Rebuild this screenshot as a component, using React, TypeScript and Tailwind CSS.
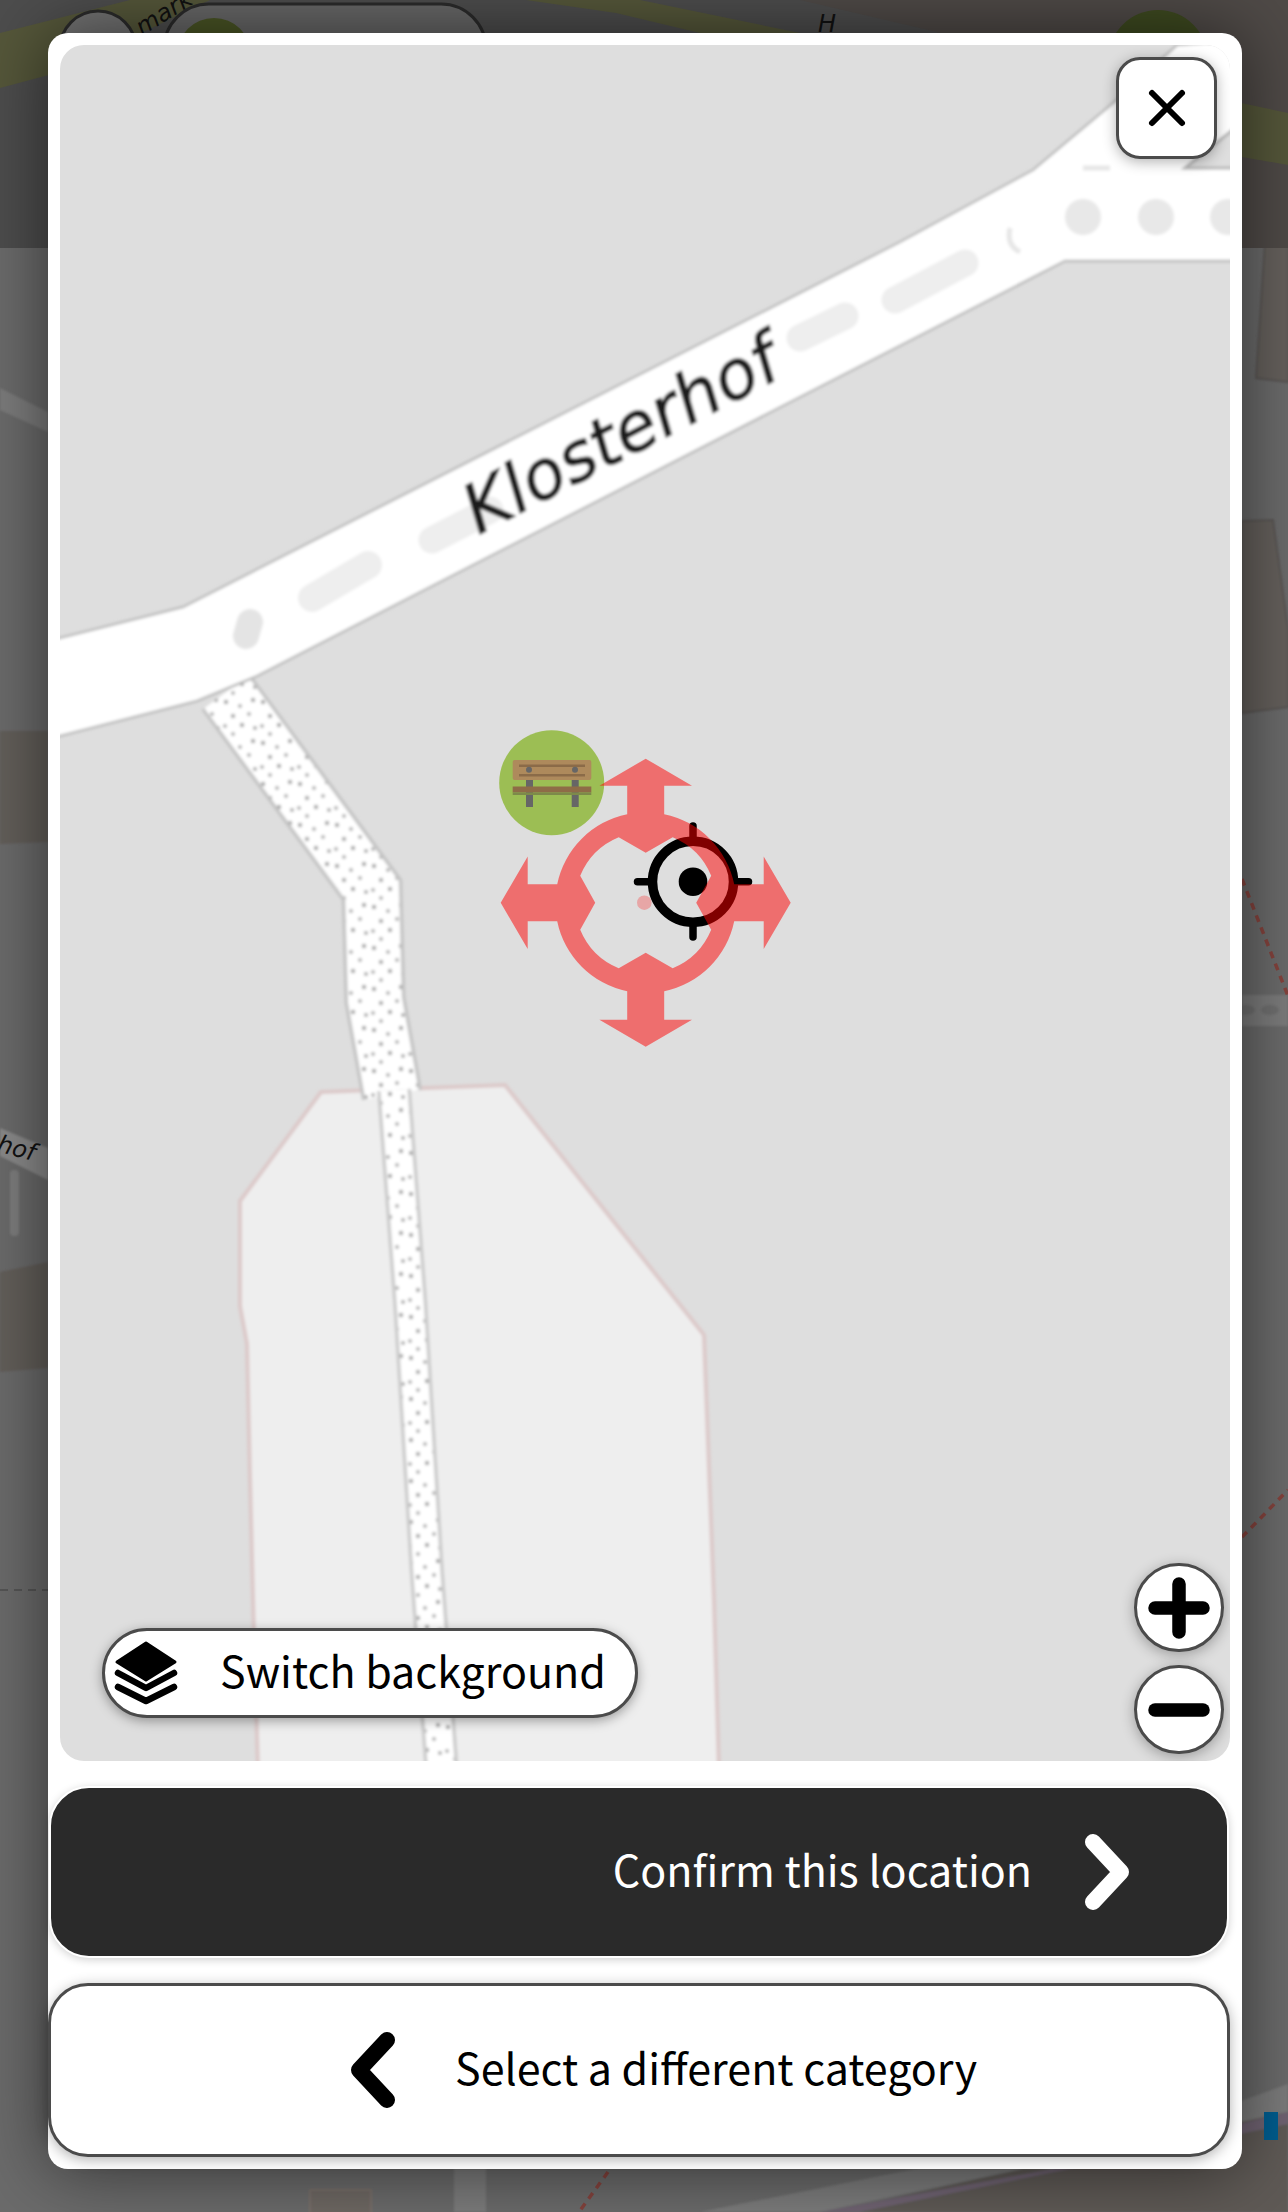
const font = "font-['Noto_Sans_CJK_JP','Noto_Sans',sans-serif]";

const BackdropMap = () => (
  <svg className="absolute inset-0" width="1288" height="2212" viewBox="0 0 1288 2212">
    <defs>
      <filter id="bgsoft"><feGaussianBlur stdDeviation="1" /></filter>
    </defs>
    <rect width="1288" height="2212" fill="#6b6b6b" />
    <g filter="url(#bgsoft)">
      <polygon points="0,388 48,412 48,432 0,410" fill="#7c7c7c" />
      <polygon points="0,731 48,731 48,842 0,844" fill="#635e5a" />
      <polygon points="0,1128 48,1148 48,1180 0,1156" fill="#8a8a8a" />
      <rect x="10" y="1170" width="9" height="66" rx="4" fill="#7e7e7e" />
      <polygon points="0,1272 48,1262 48,1368 0,1372" fill="#635e5a" />
      <polygon points="1266,227 1288,228 1288,382 1256,378" fill="#65605c" stroke="#5a5654" strokeWidth="2" />
      <polygon points="1242,521 1273,520 1288,629 1288,707 1242,713" fill="#65605c" stroke="#5a5654" strokeWidth="2" />
      <rect x="1242" y="995" width="46" height="31" fill="#7c7c7c" />
      <ellipse cx="1246" cy="1010" rx="9" ry="5" fill="#707070" />
      <ellipse cx="1270" cy="1010" rx="9" ry="5" fill="#707070" />
      <polygon points="830,2212 1288,2110 1288,2212" fill="#5f5a56" />
      <polygon points="700,2212 930,2166 1052,2169 1288,2084 1288,2112 820,2212" fill="#7c7c7c" />
      <polygon points="820,2212 1052,2169 1288,2112 1288,2124 860,2212" fill="#6f6372" />
      <rect x="454" y="2165" width="32" height="47" fill="#7c7c7c" />
      <rect x="310" y="2190" width="61" height="24" fill="#6e6864" stroke="#7a6f6a" strokeWidth="2" />
    </g>
    <g stroke="#84433d" strokeWidth="3.5" strokeDasharray="7 6" fill="none">
      <path d="M1242 879 L1288 996" />
      <path d="M1242 1537 L1288 1490" />
      <path d="M608 2172 L579 2212" />
    </g>
    <line x1="0" y1="1590" x2="48" y2="1590" stroke="#555555" strokeWidth="2" strokeDasharray="8 6" />

    <rect width="1288" height="248" fill="#4d4d4d" />
    <polygon points="0,33 130,0 210,0 60,72 0,88" fill="#55573a" />
    <polygon points="526,0 640,0 800,33 700,33 616,13" fill="#55573a" />
    <polygon points="800,0 1288,0 1288,248 1100,248 937,32" fill="#4f4a47" />
    <polygon points="1241,103 1288,113 1288,165 1242,157" fill="#55573a" />
    <rect x="60" y="11" width="76" height="90" rx="38" fill="#727272" stroke="#2b2b2b" strokeWidth="3" />
    <rect x="164" y="4" width="322" height="90" rx="45" fill="#676767" stroke="#2b2b2b" strokeWidth="3" />
    <circle cx="214" cy="55" r="37" fill="#4a5525" />
    <circle cx="1158" cy="60" r="50" fill="#3e4a20" />
    <text x="142" y="36" fontSize="24" fontStyle="italic" fill="#111111" transform="rotate(-32 142 36)" fontFamily="DejaVu Sans">mark</text>
    <text x="818" y="32" fontSize="24" fontStyle="italic" fill="#111111" fontFamily="DejaVu Sans">H</text>
    <text x="-4" y="1151" fontSize="24" fontStyle="italic" fill="#111111" transform="rotate(15 -4 1151)" fontFamily="DejaVu Sans">hof</text>
    <rect x="1264" y="2112" width="14" height="28" fill="#005d8f" />
  </svg>
);

const LocationMap = () => (
  <svg className="block" width="1170" height="1716" viewBox="60 45 1170 1716">
    <defs>
      <filter id="soft" x="-5%" y="-5%" width="110%" height="110%"><feGaussianBlur stdDeviation="1.8" /></filter>
      <filter id="crisp"><feGaussianBlur stdDeviation="0.5" /></filter>
      <pattern id="dots" patternUnits="userSpaceOnUse" width="37" height="41">
        <rect width="37" height="41" fill="#ffffff" />
        <circle cx="4" cy="5" r="2.2" fill="#a4a4a4" />
        <circle cx="18" cy="9" r="2" fill="#b0b0b0" />
        <circle cx="31" cy="3" r="2.2" fill="#a4a4a4" />
        <circle cx="11" cy="19" r="2.2" fill="#a8a8a8" />
        <circle cx="27" cy="17" r="2" fill="#b0b0b0" />
        <circle cx="3" cy="29" r="2" fill="#b0b0b0" />
        <circle cx="20" cy="28" r="2.2" fill="#a4a4a4" />
        <circle cx="33" cy="31" r="2" fill="#a8a8a8" />
        <circle cx="11" cy="37" r="2" fill="#b0b0b0" />
      </pattern>
    </defs>
    <rect x="60" y="45" width="1170" height="1716" fill="#dedede" />
    <g filter="url(#soft)">
      <polygon
        points="321,1092 505,1085 704,1335 714,1600 719,1770 258,1770 253,1600 250,1478 247,1344 240,1306 240,1201"
        fill="#eeeeee"
        stroke="#dcc9c9"
        strokeWidth="4"
      />
      <polyline points="226,692 372,890 375,1000 392,1095" fill="none" stroke="#c4c4c4" strokeWidth="61" />
      <polyline points="226,692 372,890 375,1000 392,1095" fill="none" stroke="url(#dots)" strokeWidth="54" />
      <polyline points="394,1090 410,1300 427,1574 442,1775" fill="none" stroke="#cbcbcb" strokeWidth="34" />
      <polyline points="394,1090 410,1300 427,1574 442,1775" fill="none" stroke="url(#dots)" strokeWidth="27" />
      <polygon
        points="40,643 183,607 900,242 1033,170 1113,103 1177,45 1240,40 1240,261 1065,261 255,677 197,701 40,741"
        fill="#ffffff"
        stroke="#bcbcbc"
        strokeWidth="2.5"
      />
      <polygon points="1185,168 1235,128 1235,168" fill="#dedede" stroke="#b8b8b8" strokeWidth="3" />
      <line x1="1083" y1="168" x2="1110" y2="168" stroke="#e6e6e6" strokeWidth="5" />
      <g stroke="#eeeeee" strokeLinecap="round" fill="none">
        <line x1="250" y1="622" x2="246" y2="636" stroke="#e4e4e4" strokeWidth="26" />
        <line x1="312" y1="598" x2="368" y2="565" strokeWidth="28" />
        <line x1="432" y1="540" x2="490" y2="510" strokeWidth="27" />
        <line x1="800" y1="338" x2="845" y2="316" strokeWidth="27" />
        <line x1="895" y1="300" x2="965" y2="263" strokeWidth="27" />
      </g>
      <path d="M1010 228 Q1006 245 1020 252" stroke="#e6e6e6" strokeWidth="5" fill="none" />
      <circle cx="1083" cy="217" r="18" fill="#e8e8e8" />
      <circle cx="1156" cy="217" r="18" fill="#e8e8e8" />
      <circle cx="1228" cy="217" r="18" fill="#e8e8e8" />
      <text
        x="624"
        y="457"
        textAnchor="middle"
        fontFamily="DejaVu Sans"
        fontSize="68"
        fontStyle="italic"
        fill="#1c1c1c"
        stroke="#1c1c1c"
        strokeWidth="1.2"
        transform="rotate(-27.5 624 440)"
      >
        Klosterhof
      </text>
    </g>

    {/* bench pin */}
    <circle cx="551.7" cy="782.7" r="52.5" fill="#9cbe54" />
    <rect x="526" y="780" width="7" height="27" fill="#666666" />
    <rect x="571.7" y="780" width="7" height="27" fill="#666666" />
    <rect x="512.7" y="760" width="78.6" height="20" rx="2" fill="#ae8a5c" />
    <rect x="519" y="764.5" width="66" height="2.5" fill="#8b6b48" />
    <rect x="519" y="774" width="66" height="2.5" fill="#8b6b48" />
    <circle cx="529" cy="769.7" r="3" fill="#666666" />
    <circle cx="575" cy="769.7" r="3" fill="#666666" />
    <rect x="512.7" y="786.5" width="78.6" height="6" fill="#8e6c47" />
    <rect x="512.7" y="792.5" width="78.6" height="2.5" fill="#7d8a4a" />

    {/* crosshair */}
    <g filter="url(#crisp)">
      <g stroke="#000000" fill="none" strokeLinecap="round">
        <circle cx="693" cy="881.7" r="40.5" strokeWidth="9.5" />
        <line x1="637.5" y1="881.7" x2="650" y2="881.7" strokeWidth="7.5" />
        <line x1="736" y1="881.7" x2="748.5" y2="881.7" strokeWidth="7.5" />
        <line x1="693" y1="826" x2="693" y2="838" strokeWidth="7.5" />
        <line x1="693" y1="925" x2="693" y2="937" strokeWidth="7.5" />
      </g>
      <circle cx="693" cy="881.7" r="14.3" fill="#000000" />
    </g>

    {/* move arrows */}
    <g opacity="0.5" fill="#ff0000">
      <circle cx="644.3" cy="902.7" r="7.3" opacity="0.5" />
      <g transform="translate(645.7 902.7)">
        <path
          fillRule="evenodd"
          d="M0 -144 L46.3 -117 L18.5 -117 L18.5 -88.5 A90 90 0 0 1 88.5 -18.5 L118 -18.5 L118 -46.3 L145 0 L118 46.3 L118 18.5 L88.5 18.5 A90 90 0 0 1 18.5 88.5 L18.5 117 L46.3 117 L0 144 L-46.3 117 L-18.5 117 L-18.5 88.5 A90 90 0 0 1 -88.5 18.5 L-118 18.5 L-118 46.3 L-145 0 L-118 -46.3 L-118 -18.5 L-88.5 -18.5 A90 90 0 0 1 -18.5 -88.5 L-18.5 -117 L-46.3 -117 Z M-27 -65.5 L0 -50 L27 -65.5 A71 71 0 0 1 65.5 -27 L50.5 0 L65.5 27 A71 71 0 0 1 27 65.5 L0 50 L-27 65.5 A71 71 0 0 1 -65.5 27 L-50.5 0 L-65.5 -27 A71 71 0 0 1 -27 -65.5 Z"
        />
      </g>
    </g>
  </svg>
);

const LayersIcon = () => (
  <svg width="64" height="64" viewBox="0 0 64 64" className="shrink-0">
    <path d="M32 2 L61 21 L32 39 L3 21 Z" fill="#000" stroke="#000" strokeWidth="3" strokeLinejoin="round" />
    <polyline points="4,32 32,47 60,32" fill="none" stroke="#000" strokeWidth="6.5" strokeLinecap="round" strokeLinejoin="round" />
    <polyline points="4,46 32,60 60,46" fill="none" stroke="#000" strokeWidth="6.5" strokeLinecap="round" strokeLinejoin="round" />
  </svg>
);

export default function App() {
  return (
    <div className={`relative h-[2212px] w-[1288px] overflow-hidden bg-[#6b6b6b] pt-[33px] ${font}`}>
      <BackdropMap />
      <div className="relative ml-[48px] h-[2136px] w-[1194px] rounded-[20px] bg-white pt-3 shadow-[0_0_70px_rgba(0,0,0,0.55)]">
        <div className="relative mx-3 h-[1716px] overflow-hidden rounded-3xl">
          <LocationMap />
          <button className="absolute bottom-[43px] left-[42px] flex h-[90px] w-[536px] items-center rounded-full border-[3px] border-[#4b4b4b] bg-white pl-[9px] shadow-[0_3px_12px_rgba(0,0,0,0.35)]">
            <LayersIcon />
            <span className="ml-[42px] whitespace-nowrap pb-2 text-[43px] leading-none text-black">Switch background</span>
          </button>
          <div className="absolute bottom-[7px] right-[6px] flex flex-col gap-[13px]">
            <button className="flex h-[89px] w-[90px] items-center justify-center rounded-full border-[3px] border-[#4b4b4b] bg-white shadow-[0_3px_14px_rgba(0,0,0,0.3)]">
              <svg width="62" height="62" viewBox="0 0 62 62">
                <path d="M7 31 H55 M31 7 V55" stroke="#000" strokeWidth="13.5" strokeLinecap="round" />
              </svg>
            </button>
            <button className="flex h-[89px] w-[90px] items-center justify-center rounded-full border-[3px] border-[#4b4b4b] bg-white shadow-[0_3px_14px_rgba(0,0,0,0.3)]">
              <svg width="62" height="62" viewBox="0 0 62 62">
                <path d="M7 31 H55" stroke="#000" strokeWidth="13.5" strokeLinecap="round" />
              </svg>
            </button>
          </div>
          <button className="absolute right-[13px] top-[12px] flex h-[102px] w-[101px] items-center justify-center rounded-3xl border-[3px] border-[#4b4b4b] bg-white shadow-[0_3px_14px_rgba(0,0,0,0.3)]">
            <svg width="40" height="40" viewBox="0 0 40 40">
              <path d="M5 5 L35 35 M35 5 L5 35" stroke="#000" strokeWidth="6" strokeLinecap="round" />
            </svg>
          </button>
        </div>

        <div className="mt-[25px] flex w-[1182px] flex-col gap-[25px]">
          <button className="mx-px flex h-[172px] items-center justify-end rounded-[40px] border-2 border-white bg-[#2a2a2a] pr-[96px] text-white shadow-[0_2px_8px_rgba(0,0,0,0.18)]">
            <span className="whitespace-nowrap pb-2 text-[43px] leading-none">Confirm this location</span>
            <svg className="ml-[53px]" width="46" height="76" viewBox="0 0 46 76">
              <polyline points="8,8 36,38 8,68" fill="none" stroke="#fff" strokeWidth="16" strokeLinecap="round" strokeLinejoin="round" />
            </svg>
          </button>

          <button className="flex h-[174px] items-center rounded-[40px] border-[3px] border-[#4b4b4b] bg-white pl-[298px] text-black shadow-[0_3px_14px_rgba(0,0,0,0.3)]">
            <svg width="46" height="76" viewBox="0 0 46 76">
              <polyline points="38,8 10,38 38,68" fill="none" stroke="#000" strokeWidth="16" strokeLinecap="round" strokeLinejoin="round" />
            </svg>
            <span className="ml-[60px] whitespace-nowrap pb-2 text-[43px] leading-none">Select a different category</span>
          </button>
        </div>
      </div>
    </div>
  );
}
